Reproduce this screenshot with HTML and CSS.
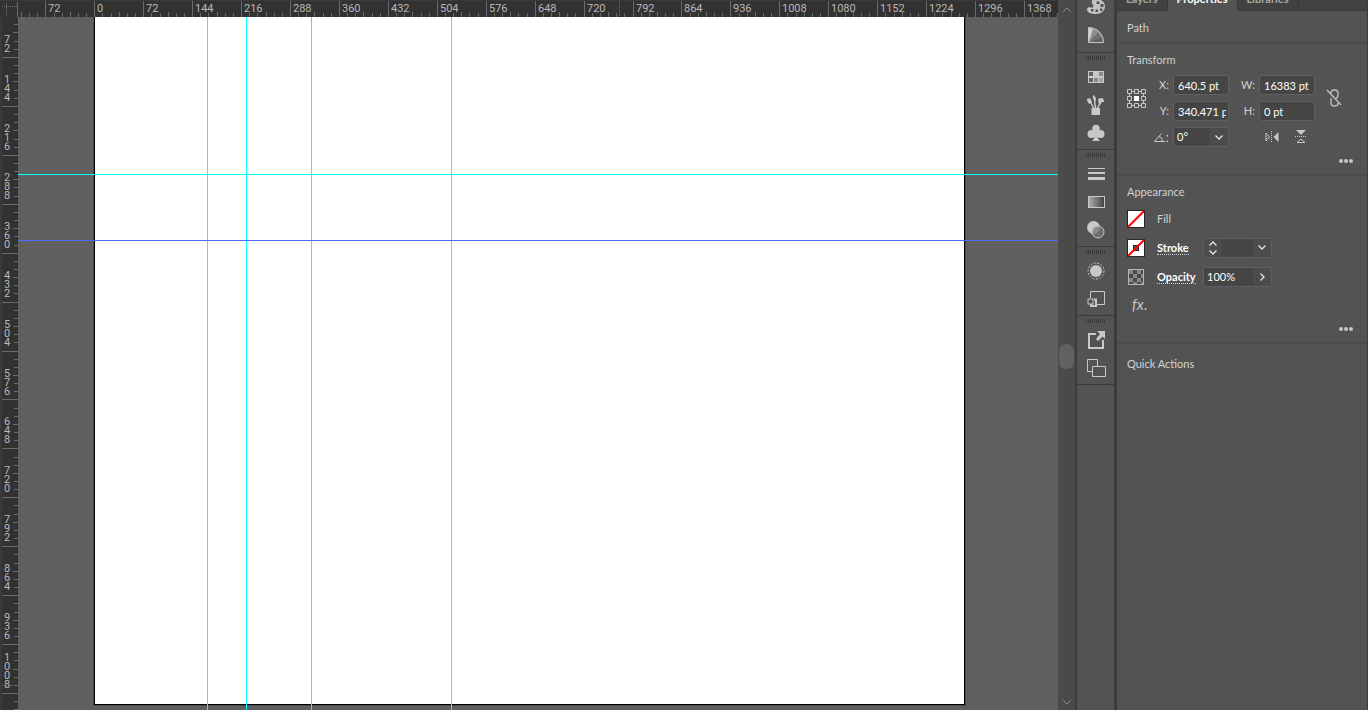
FILE: index.html
```html
<!DOCTYPE html>
<html lang="en">
<head>
<meta charset="utf-8">
<title>Artboard</title>
<link rel="stylesheet" href="styles.css">
</head>
<body>
<main class="workspace">
  <svg class="corner" width="18" height="17"><path class="dotted" d="M2 5.5H18M6.5 2V17"/><path class="tick" d="M17.5 1V17"/></svg>
  <svg class="ruler ruler-h" id="ruler-h"></svg>
  <svg class="ruler ruler-v" id="ruler-v"></svg>
  <div class="canvas">
    <div class="artboard"></div>
    <div class="guide guide-v g1"></div>
    <div class="guide guide-v g2"></div>
    <div class="guide guide-v g3"></div>
    <div class="guide guide-v g4"></div>
    <div class="guide guide-h g5"></div>
    <div class="guide guide-h g6"></div>
  </div>
  <div class="scrollbar">
    <button class="scroll-btn" aria-label="Scroll up"><svg width="10" height="6"><path d="M1 5L5 1L9 5"/></svg></button>
    <div class="thumb"></div>
    <button class="scroll-btn" aria-label="Scroll down"><svg width="10" height="6"><path d="M1 1L5 5L9 1"/></svg></button>
  </div>
</main>

<nav class="dock" aria-label="Panels">
  <div class="dock-group dock-first">
    <button aria-label="Color"><svg width="20" height="18" viewBox="0 0 20 18"><path fill="#c4c4c4" fill-rule="evenodd" d="M8 1C13 0 19 3 19 8.500C19 13 15 16 10 16C5 16 1 14.500 1 11.500C1 9 3.500 9 5 9.500C7 10 8 8.500 7 7C5.500 5 5 2 8 1ZM10.500 3.500h3v2.500h-3ZM14.500 6h3v3h-3ZM14 10.500h2.500v2.500H14ZM9.500 11.500h2.500v2.500H9.500ZM5 11h2.500v2.500H5Z"/></svg></button>
    <button aria-label="Color Guide"><svg width="18" height="18" viewBox="0 0 18 18"><path fill="#a8a8a8" d="M2 2C9 2 16 8 16 16H2Z"/><path fill="#d0d0d0" d="M2 2L6 3L2 16Z"/><path fill="#8c8c8c" d="M6 3L11 6L2 16Z"/><path fill="#707070" d="M11 6L14.500 11L2 16Z"/><path fill="#606060" d="M14.500 11L16 16H2Z"/><path fill="none" stroke="#c8c8c8" d="M1.500 1.500C10 1.500 16.500 8 16.500 16.500H1.500Z"/></svg></button>
  </div>
  <div class="dock-group">
    <div class="grip"></div>
    <button aria-label="Swatches"><svg width="16" height="12" viewBox="0 0 16 12"><path fill="#c8c8c8" d="M0 0H16V12H0Z"/><path fill="#646464" d="M1 1h4v4H1ZM1 7h4v4H1Z"/><path fill="#888" d="M11 1h4v4h-4ZM6 7h4v4H6Z"/><path fill="#a4a4a4" d="M11 7h4v4h-4Z"/></svg></button>
    <button aria-label="Brushes"><svg width="18" height="22" viewBox="0 0 18 22"><path fill="#c8c8c8" d="M4.500 14H13V21H4.500Z"/><path fill="none" stroke="#c8c8c8" stroke-width="1.500" d="M3 7L6.500 14M7.500 6L8.500 14M13.500 8L10.500 14"/><path fill="#c8c8c8" d="M6 1Q9 2 9 6Q8 8 7 6Q5 4 6 1ZM0 5L3 4L5 8L3 10Q0 9 0 5ZM11 5L14 4Q17 4 17 8L15 8L13 11Q11 9 11 5Z"/></svg></button>
    <button aria-label="Symbols"><svg width="18" height="18" viewBox="0 0 18 18"><g fill="#c8c8c8"><circle cx="9" cy="4.500" r="3.800"/><circle cx="4.500" cy="10" r="4"/><circle cx="13.500" cy="10" r="4"/><path d="M8 7h2Q10 15 13 17H5Q8 15 8 7Z"/></g></svg></button>
  </div>
  <div class="dock-group">
    <div class="grip"></div>
    <button aria-label="Stroke"><svg width="17" height="12"><path fill="#c8c8c8" d="M0 0H17V1H0ZM0 4H17V6H0ZM0 9H17V12H0Z"/></svg></button>
    <button aria-label="Gradient"><svg width="17" height="12"><defs><linearGradient id="grad"><stop stop-color="#b0b0b0"/><stop offset="1" stop-color="#404040"/></linearGradient></defs><rect x=".5" y=".5" width="16" height="11" fill="url(#grad)" stroke="#c8c8c8"/></svg></button>
    <button aria-label="Transparency"><svg width="20" height="20"><circle cx="7.500" cy="7.500" r="6.500" fill="#c8c8c8"/><circle cx="12" cy="12" r="6" fill="#777" fill-opacity=".75" stroke="#c8c8c8"/></svg></button>
  </div>
  <div class="dock-group">
    <div class="grip"></div>
    <button aria-label="Appearance"><svg width="18" height="18"><circle cx="9" cy="9" r="6" fill="#c8c8c8"/><circle cx="9" cy="9" r="8" fill="none" stroke="#c8c8c8" stroke-dasharray="2 1.500"/></svg></button>
    <button aria-label="Graphic Styles"><svg width="18" height="18"><path fill="none" stroke="#c8c8c8" d="M3.500 8V1.500H17.500V14.500H10"/><rect x="1" y="9" width="5" height="5" fill="#535353" stroke="#c8c8c8"/><path fill="none" stroke="#c8c8c8" stroke-width="2" d="M7 9.500H9V16H4V14"/></svg></button>
  </div>
  <div class="dock-group dock-last">
    <div class="grip"></div>
    <button aria-label="Asset Export"><svg width="20" height="20"><path fill="none" stroke="#c8c8c8" stroke-width="2" d="M10 4H3V18H17V10"/><path fill="#c8c8c8" d="M11 1H19V9L16.500 6.500L12 11L10 9L14 4Z"/></svg></button>
    <button aria-label="Artboards"><svg width="19" height="19"><path fill="none" stroke="#c8c8c8" d="M5 12.500H.5V.5H10.500V7M5.500 7.500H18.500V17.500H5.500Z"/></svg></button>
  </div>
</nav>

<aside class="panel">
  <div class="tabs">
    <button class="tab">Layers</button>
    <button class="tab active">Properties</button>
    <button class="tab">Libraries</button>
  </div>
  <section class="selection"><h2>Path</h2></section>

  <section class="transform">
    <h2>Transform</h2>
    <div class="transform-grid">
      <button class="anchor" aria-label="Reference point"><svg width="20" height="20"><path fill="none" stroke="#c8c8c8" d="M1.500 1.500h4v4h-4ZM8.500 1.500h4v4h-4ZM15.500 1.500h4v4h-4ZM1.500 8.500h4v4h-4ZM15.500 8.500h4v4h-4ZM1.500 15.500h4v4h-4ZM8.500 15.500h4v4h-4ZM15.500 15.500h4v4h-4ZM5.500 3.500h3M12.500 3.500h3M5.500 17.500h3M12.500 17.500h3M3.500 5.500v3M3.500 12.500v3M17.500 5.500v3M17.500 12.500v3"/><path fill="#fff" d="M8 8h5v5H8Z"/></svg></button>
      <label for="x">X:</label><input id="x" class="field" value="640.5 pt">
      <label for="w">W:</label><input id="w" class="field" value="16383 pt">
      <label for="y">Y:</label><input id="y" class="field" value="340.471 pt">
      <label for="h">H:</label><input id="h" class="field" value="0 pt">
      <button class="link" aria-label="Constrain proportions"><svg width="16" height="20"><path fill="none" stroke="#c4c4c4" stroke-width="1.300" d="M5 7V5Q5 2 8.500 2Q12 2 12 5V7.500Q12 9.500 10 10M5 10V15Q5 18 8.500 18Q12 18 12 15V13.500M1 2L15 17"/></svg></button>
      <label for="angle" aria-label="Angle"><svg width="16" height="11"><path fill="none" stroke="#c8c8c8" d="M8.500 1.500L1.500 9.500H12M6 4.500Q9.500 5 9.500 9.500"/><path fill="#c8c8c8" d="M13.500 3h1.500v1.500h-1.500ZM13.500 8.500h1.500v1.500h-1.500Z"/></svg></label>
      <div class="combo angle"><input id="angle" value="0°"><button aria-label="Angle presets"><svg width="8" height="5"><path d="M.5 .5L4 4L7.500 .5"/></svg></button></div>
      <div class="flips">
        <button aria-label="Flip horizontal"><svg width="14" height="12"><path fill="none" stroke="#c8c8c8" d="M1 2V10L4.500 6Z"/><path fill="#c8c8c8" d="M13.500 1V11L8.500 6Z"/><path stroke="#c8c8c8" stroke-dasharray="1 1" d="M6.500 0V12"/></svg></button>
        <button aria-label="Flip vertical"><svg width="12" height="14"><path fill="#c8c8c8" d="M1 0H11L6 5Z"/><path fill="none" stroke="#c8c8c8" d="M2 12.500H10L6 9Z"/><path stroke="#c8c8c8" stroke-dasharray="1 1" d="M0 6.500H12"/></svg></button>
      </div>
    </div>
    <button class="more" aria-label="More transform options"><svg width="14" height="4"><g fill="#c8c8c8"><circle cx="2" cy="2" r="2"/><circle cx="7" cy="2" r="2"/><circle cx="12" cy="2" r="2"/></g></svg></button>
  </section>

  <section class="appearance">
    <h2>Appearance</h2>
    <div class="prop">
      <button class="swatch" aria-label="Fill color"><svg width="18" height="18"><rect x=".5" y=".5" width="17" height="17" fill="#fff" stroke="#262626"/><path stroke="#f00" stroke-width="2" d="M1 17L17 1"/></svg></button>
      <span class="prop-name">Fill</span>
    </div>
    <div class="prop">
      <button class="swatch" aria-label="Stroke color"><svg width="18" height="18"><rect x=".5" y=".5" width="17" height="17" fill="#fff" stroke="#262626"/><rect x="6.500" y="6.500" width="5" height="5" fill="#535353" stroke="#262626"/><path stroke="#f00" stroke-width="2" d="M1 17L17 1"/></svg></button>
      <label class="prop-name linked" for="stroke"><span>Stroke</span></label>
      <div class="combo wide">
        <div class="stepper"><button aria-label="Increase"><svg width="8" height="5"><path d="M.5 4.500L4 1L7.500 4.500"/></svg></button><button aria-label="Decrease"><svg width="8" height="5"><path d="M.5 .5L4 4L7.500 .5"/></svg></button></div>
        <input id="stroke" value=""><button aria-label="Stroke presets"><svg width="8" height="5"><path d="M.5 .5L4 4L7.500 .5"/></svg></button>
      </div>
    </div>
    <div class="prop">
      <span class="swatch"><svg width="18" height="18"><defs><pattern id="check" x="2" y="2" width="8" height="8" patternUnits="userSpaceOnUse"><path fill="#4a4a4a" d="M0 0h8v8H0Z"/><path fill="#888" d="M0 0h4v4H0ZM4 4h4v4H4Z"/></pattern></defs><rect x="1.500" y="1.500" width="15" height="15" fill="url(#check)" stroke="#b8b8b8"/></svg></span>
      <label class="prop-name linked" for="opacity"><span>Opacity</span></label>
      <div class="combo wide"><input id="opacity" value="100%"><button aria-label="Opacity slider"><svg width="5" height="8"><path d="M.5 .5L4 4L.5 7.500"/></svg></button></div>
    </div>
    <div class="prop"><button class="fx"><i>fx</i>.</button></div>
    <button class="more" aria-label="More appearance options"><svg width="14" height="4"><g fill="#c8c8c8"><circle cx="2" cy="2" r="2"/><circle cx="7" cy="2" r="2"/><circle cx="12" cy="2" r="2"/></g></svg></button>
  </section>

  <section class="quick"><h2>Quick Actions</h2></section>
</aside>
<script src="rulers.js"></script>
</body>
</html>
```
FILE: styles.css
```css
* { box-sizing: border-box; }
body {
  margin: 0;
  height: 100vh;
  display: flex;
  overflow: hidden;
  background: #535353;
  color: #d2d2d2;
  font: 11px/16px Lato, "Open Sans", sans-serif;
}
button, input { font: inherit; color: inherit; }
button { display: flex; align-items: center; justify-content: center; padding: 0; border: 0; background: none; }
svg { display: block; flex: none; }

/* Workspace */
.workspace {
  flex: 1;
  min-width: 0;
  display: grid;
  grid-template: 17px minmax(0, 1fr) / 18px minmax(0, 1fr) 17px;
}
.corner, .ruler { background: #323232; }
.ruler { width: 100%; height: 100%; overflow: hidden; }
.ruler-h, .corner { border-top: 1px solid #3a3a3a; }
.ruler-v { grid-area: 2 / 1; border-left: 2px solid #3a3a3a; }
.tick { stroke: #6a6a6a; fill: none; }
.dotted { stroke: #707070; fill: none; stroke-dasharray: 1 1; }
.ruler text { fill: #b8b8b8; font: 11px Roboto, sans-serif; }
.canvas { grid-area: 2 / 2; position: relative; overflow: hidden; background: #606060; }
.artboard {
  position: absolute;
  left: 76px;
  top: -20px;
  width: 871px;
  bottom: 5px;
  background: #fff;
  border: 1px solid #000;
  box-shadow: 0 0 0 1px #4c4c4c;
}
.guide { position: absolute; background: #0ff; }
.guide-v { top: 0; bottom: 0; width: 1px; }
.guide-h { left: 0; right: 0; height: 1px; }
.g1 { left: 189px; }
.g2 { left: 228px; }
.g3 { left: 293px; }
.g4 { left: 433px; }
.g5 { top: 157px; }
.g6 { top: 223px; background: #4f6bff; }
.scrollbar {
  grid-area: 1 / 3 / 3 / 4;
  position: relative;
  display: flex;
  flex-direction: column;
  justify-content: space-between;
  background: #4a4a4a;
}
.scroll-btn { height: 16px; width: 17px; }
.scroll-btn svg { fill: none; stroke: #8a8a8a; }
.scroll-btn:first-child { height: 19px; }
.thumb { position: absolute; left: 1px; top: 344px; width: 15px; height: 25px; border-radius: 7px; background: #616161; }

/* Icon dock */
.dock { width: 42px; border-left: 2px solid #3c3c3c; border-right: 3px solid #3c3c3c; background: #535353; }
.dock-group { padding: 3px 0 2px; border-bottom: 1px solid #393939; }
.dock-group.dock-first { margin-top: -7px; padding: 0 0 3px; }
.dock button { width: 100%; height: 28px; padding-left: 1px; }
.grip {
  width: 19px;
  height: 4px;
  margin: 0 auto 3px;
  background: repeating-linear-gradient(90deg, #3a3a3a 0 1px, transparent 1px 2px);
}

/* Properties panel */
.panel { width: 251px; border-right: 1px solid #3c3c3c; }
.tabs { display: flex; height: 28px; margin-top: -17px; background: #424242; border-bottom: 1px solid #393939; }
.tab { height: 28px; padding: 4px 9px 0; border-right: 1px solid #393939; color: #a8a8a8; font-weight: 700; }
.tab.active { background: #535353; color: #fff; }
.panel section { padding: 8px 14px 5px 9px; border-bottom: 2px solid #4b4b4b; }
.panel h2 { margin: 0 1px; font-size: 11px; font-weight: 400; }
.panel .selection { padding: 9px 9px 6px; }
.panel .quick { padding-top: 12px; border-bottom: 0; }

.transform-grid {
  display: grid;
  grid-template-columns: 20px 27px 56px 30px 56px 1fr;
  grid-template-rows: repeat(3, 20px);
  row-gap: 6px;
  margin: 7px 0 6px;
  align-items: center;
}
.transform-grid label { display: flex; justify-content: flex-end; padding-right: 4px; }
.anchor { grid-area: 1 / 1 / 3 / 2; }
.link { grid-area: 1 / 6 / 3 / 7; }
.transform-grid label[for="y"] { grid-area: 2 / 2; }
.transform-grid label[for="angle"] { grid-area: 3 / 2; }
.combo.angle { grid-area: 3 / 3; }
.flips { grid-area: 3 / 4 / 4 / 6; display: flex; gap: 16px; padding-left: 36px; }
.field, .combo { width: 100%; height: 20px; border: 1px solid #606060; border-radius: 3px; background: #454545; color: #fff; }
.field { padding: 0 2px 0 4px; }
.combo { display: flex; overflow: hidden; }
.combo input { flex: 1; min-width: 0; padding: 0 3px; border: 0; background: #454545; color: #fff; }
.combo button { width: 18px; background: #4c4c4c; }
.combo svg { fill: none; stroke: #e6e6e6; stroke-width: 1.3; }
.stepper { display: flex; flex-direction: column; background: #4c4c4c; }
.stepper button { flex: 1; }
.more { height: 16px; margin-left: auto; }

.appearance h2 { margin-bottom: 4px; }
.prop { display: flex; align-items: center; height: 29px; padding-left: 1px; }
.prop-name { width: 46px; margin-left: 12px; }
.linked { color: #fff; font-weight: 700; }
.linked span { border-bottom: 1px dotted #d2d2d2; line-height: 12px; display: inline-block; }
.combo.wide { width: 69px; }
.fx { margin: 0 0 4px 5px; font-size: 15px; color: #c8c8c8; }
.appearance .more { margin-top: 1px; }
```
FILE: rulers.js
```js
// Draws both rulers: a labelled tick every 72 pt, a short one every 12 pt.
const SCALE = 0.6796;
const STEP = 72;
const NS = "http://www.w3.org/2000/svg";

function add(parent, name, attrs, text) {
  const el = document.createElementNS(NS, name);
  for (const key in attrs) el.setAttribute(key, attrs[key]);
  if (text !== undefined) el.textContent = text;
  parent.appendChild(el);
}

function drawRuler(svg, vertical, origin, length, cursor) {
  for (let pt = -2 * STEP; origin + pt * SCALE < length; pt += 12) {
    const p = Math.floor(origin + pt * SCALE) + 0.5;
    if (!vertical && p < 0) continue;
    const major = pt % STEP === 0;
    const size = major ? 16 : pt % 36 === 0 ? 5 : 4;
    add(svg, "path", { class: "tick", d: vertical ? `M16 ${p}h${-size}` : `M${p} 16v${-size}` });
    if (!major) continue;
    const label = String(Math.abs(pt));
    if (!vertical) {
      add(svg, "text", { x: p + 2.5, y: 11 }, label);
    } else if (pt > 0 && p + 44 < length + STEP / 4) {
      [...label].forEach((digit, i) => {
        const y = p + 43.5 - 9 * (label.length - i - 1);
        add(svg, "text", { x: 2, y }, digit);
      });
    }
  }
  add(svg, "path", { class: "dotted", d: vertical ? `M0 ${cursor}h16` : `M${cursor} 0v16` });
}

const h = document.getElementById("ruler-h");
const v = document.getElementById("ruler-v");
drawRuler(h, false, 76.8, h.getBoundingClientRect().width, 601.5);
drawRuler(v, true, -57.4, v.getBoundingClientRect().height, 668.5);
```
